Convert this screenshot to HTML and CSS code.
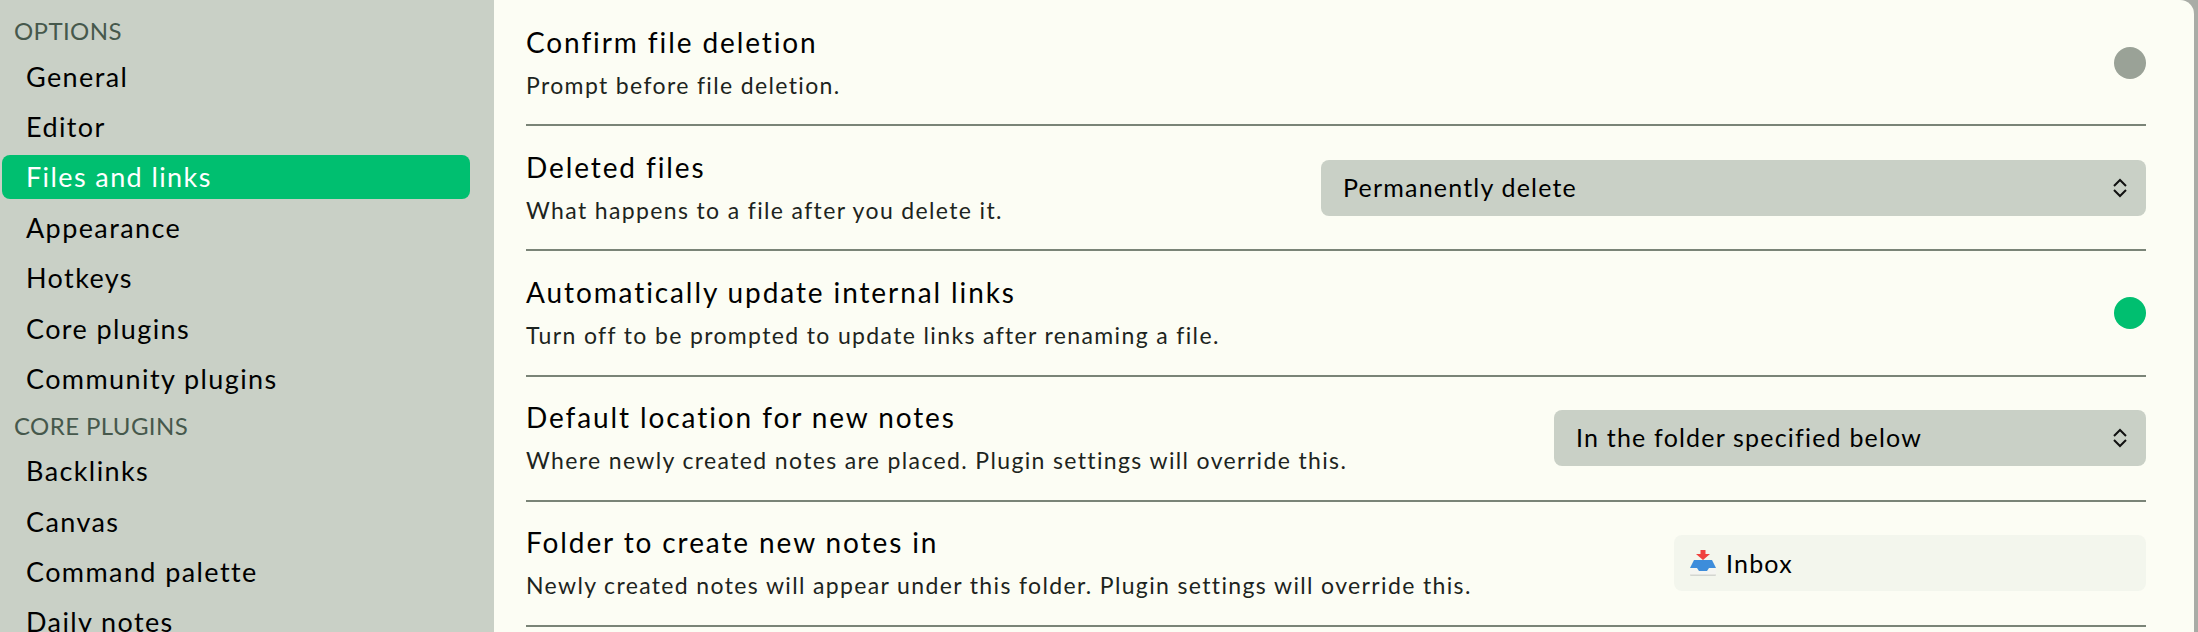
FILE: index.html
```html
<!doctype html>
<html>
	<head>
		<meta http-equiv="Content-Type" content="text/html;charset=UTF-8"/>
		<title>Files and links</title>
		<link rel="stylesheet" href="styles.css">
	</head>
<body>
	<div class="window">
		<div class="sidebar">
			<div class="group">Options</div>
			<div class="item">General</div>
			<div class="item">Editor</div>
			<div class="item on">Files and links</div>
			<div class="item">Appearance</div>
			<div class="item">Hotkeys</div>
			<div class="item">Core plugins</div>
			<div class="item">Community plugins</div>
			<div class="group">Core plugins</div>
			<div class="item">Backlinks</div>
			<div class="item">Canvas</div>
			<div class="item">Command palette</div>
			<div class="item">Daily notes</div>
		</div>
		<div class="main">
			<div class="row">
				<div class="info">
					<div class="name">Confirm file deletion</div>
					<div class="desc">Prompt before file deletion.</div>
				</div>
				<span class="dot"></span>
			</div>
			<div class="row">
				<div class="info">
					<div class="name">Deleted files</div>
					<div class="desc">What happens to a file after you delete it.</div>
				</div>
				<div class="select wide">
					<span class="value">Permanently delete</span>
					<svg class="updown" viewBox="0 0 14 20"><path d="M1 8 7 2l6 6M1 12l6 6 6-6"/></svg>
				</div>
			</div>
			<div class="row">
				<div class="info">
					<div class="name">Automatically update internal links</div>
					<div class="desc">Turn off to be prompted to update links after renaming a file.</div>
				</div>
				<span class="dot green"></span>
			</div>
			<div class="row">
				<div class="info">
					<div class="name">Default location for new notes</div>
					<div class="desc">Where newly created notes are placed. Plugin settings will override this.</div>
				</div>
				<div class="select">
					<span class="value">In the folder specified below</span>
					<svg class="updown" viewBox="0 0 14 20"><path d="M1 8 7 2l6 6M1 12l6 6 6-6"/></svg>
				</div>
			</div>
			<div class="row">
				<div class="info">
					<div class="name">Folder to create new notes in</div>
					<div class="desc">Newly created notes will appear under this folder. Plugin settings will override this.</div>
				</div>
				<div class="folder">
					<svg class="inbox" viewBox="0 0 26 26">
						<path fill="#f4f5f1" d="M0 18h7l2 3h8l2-3h7v7a1 1 0 0 1-1 1H1a1 1 0 0 1-1-1z"/>
						<path fill="#3d8ddb" d="M4 10h18l4 8h-7l-2 3H9l-2-3H0z"/>
						<path fill="#f0423e" d="M10.500 0h5v4h4.500L13 10 6 4h4.500z"/>
						<path fill="#d3d6d0" d="M0 24.500h26v.5a1 1 0 0 1-1 1H1a1 1 0 0 1-1-1z"/>
					</svg>
					<span>Inbox</span>
				</div>
			</div>
		</div>
	</div>
</body>
</html>
```

FILE: styles.css
```css
*{margin:0;padding:0;box-sizing:border-box;}
html,body{height:100%;overflow:hidden;}
body{background:#a9aca6;font-family:"Lato","Noto Sans",sans-serif;color:#000;}
.window{display:flex;height:632px;width:2194px;overflow:hidden;border-top-right-radius:14px;}

.sidebar{width:494px;flex:none;background:#c9d0c6;padding:17px 24px 0 2px;}
.group{height:28px;line-height:28px;padding-left:12px;margin-bottom:9.600px;font-size:24px;letter-spacing:.4px;color:#46584c;text-transform:uppercase;}
.item{height:44px;line-height:44px;margin-bottom:6.400px;padding-left:24px;border-radius:8px;font-size:27px;letter-spacing:1.4px;}
.item.on{background:#00bf70;color:#fff;}
.item + .group{margin-top:10.600px;}

.main{flex:1;background:#fcfdf4;padding:1px 48px 0 32px;}
.row{display:flex;align-items:center;justify-content:space-between;height:125.200px;border-bottom:2px solid #7a8477;}
.info{margin-bottom:2px;}
.name{font-size:28px;letter-spacing:1.9px;line-height:36px;}
.desc{font-size:23px;letter-spacing:1.36px;line-height:30px;margin-top:10px;color:#1c2420;}

.dot{width:32px;height:32px;border-radius:50%;background:#9aa297;}
.dot.green{background:#00bf70;}

.select{display:flex;align-items:center;justify-content:space-between;width:592px;height:56px;padding:0 19px 0 22px;border-radius:8px;background:#c9d0c6;font-size:25px;letter-spacing:1.2px;}
.select.wide{width:825px;}
.value{margin-bottom:2px;}
.updown{width:14px;height:20px;fill:none;stroke:#111;stroke-width:2;}

.folder{display:flex;align-items:center;gap:10px;width:472px;height:56px;padding-left:16px;border-radius:8px;background:#f3f6ed;font-size:25px;letter-spacing:1.2px;}
.inbox{width:26px;height:26px;}
```
